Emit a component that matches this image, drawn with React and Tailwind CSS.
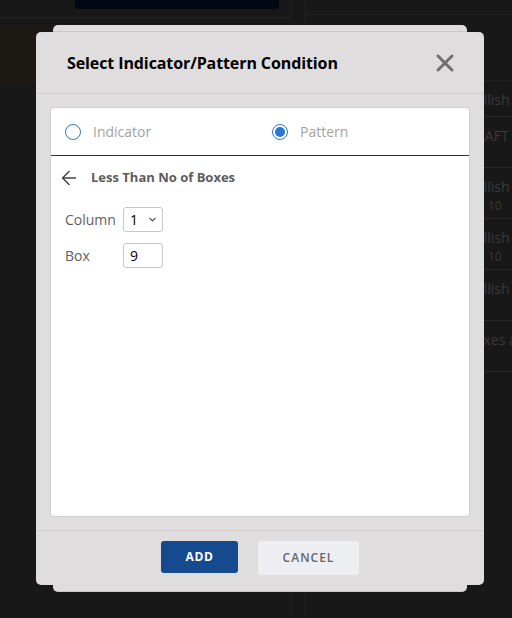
import { ArrowLeft, ChevronDown, X } from 'lucide-react';

const BG_ROWS = [
  { title: 'DRAFT and RSI', sub: '' },
  { title: 'Bullish and Boxes', sub: '10' },
  { title: 'Bullish Reversal', sub: '10' },
  { title: 'Bullish Pattern', sub: '' },
  { title: 'Boxes and Columns', sub: '' },
];

const Radio = ({ checked, label }) => (
  <label className="flex items-center gap-[12px]">
    <span className="w-[16px] h-[16px] rounded-full border-[1.5px] border-[#2b77d6] flex items-center justify-center">
      {checked && <span className="w-[10px] h-[10px] rounded-full bg-[#2b77d6]" />}
    </span>
    <span className="text-[14px] text-[#a3a3a3]">{label}</span>
  </label>
);

const App = () => {
  return (
    <div className="relative w-[512px] h-[618px] overflow-hidden bg-[#181818] font-['Open_Sans',sans-serif]">
      {/* page behind the dialog */}
      <div className="flex h-full">
        <div className="w-[291px] shrink-0 border-r border-[#1f1f1f] flex flex-col">
          <div className="h-[18px] border-b border-[#222] pl-[75px] pr-[11px]">
            <div className="h-[9px] bg-[#030712] rounded-b-[3px]" />
          </div>
          <div className="mt-[11px] h-[54px] bg-[#1c1813]" />
        </div>
        <div className="flex-1 min-w-0 ml-[14px] border-l border-[#1f1f1f] flex flex-col overflow-hidden">
          <div className="h-[15px] border-b border-[#232323]" />
          <div className="h-[66px] border-b border-[#222]" />
          <div className="h-[36px] border-b border-[#262626] pl-[160px] pt-[10px] text-[14px] leading-[18px] text-[#3a3a3a] whitespace-nowrap">
            Bullish Engulfing and
          </div>
          {BG_ROWS.map((row) => (
            <div
              key={row.title}
              className="h-[51px] border-b border-[#262626] pl-[160px] pt-[10px] text-[14px] leading-[18px] text-[#3a3a3a] whitespace-nowrap"
            >
              <p>{row.title}</p>
              {row.sub && <p className="pl-[22px] text-[12px] mt-[1px]">{row.sub}</p>}
            </div>
          ))}
        </div>
      </div>

      {/* stacked dialog behind */}
      <div className="absolute left-[53px] top-[25px] w-[414px] h-[567px] rounded-[5px] bg-[#dedcdc] border-b border-[#c9c7c7]">
        <div className="h-[7px] border-b border-[#c9c7c7]" />
      </div>

      {/* dialog */}
      <div className="absolute left-[36px] top-[32px] w-[448px] h-[553px] rounded-[5px] bg-[#dfdddd] flex flex-col">
        <div className="h-[62px] shrink-0 flex items-center justify-between pl-[31px] pr-[25px] border-b border-[#cdcbcb]">
          <h2 className="text-[16px] font-bold text-black tracking-[-0.1px]">
            Select Indicator/Pattern Condition
          </h2>
          <X size={28} strokeWidth={2.5} className="text-[#6e6e6e]" />
        </div>

        <div className="flex-1 px-[14px] pt-[13px] pb-[13px]">
          <div className="h-full bg-white rounded-[4px] border border-[#cfcfcf] flex flex-col">
            <div className="h-[48px] shrink-0 flex items-center pl-[14px] border-b border-[#333]">
              <div className="w-[207px]">
                <Radio label="Indicator" />
              </div>
              <Radio checked label="Pattern" />
            </div>

            <div className="px-[14px] pt-[12px]">
              <div className="flex items-center gap-[11px] h-[20px]">
                <ArrowLeft size={22} strokeWidth={1.6} className="text-[#444] -ml-[7px]" />
                <span className="text-[13px] font-bold text-[#5c5c5c]">Less Than No of Boxes</span>
              </div>

              <div className="mt-[19px] flex flex-col gap-[11px] text-[14px] text-[#5f5f5f]">
                <div className="flex items-center">
                  <span className="w-[58px]">Column</span>
                  <div className="w-[40px] h-[25px] border border-[#c9c9c9] rounded-[3px] flex items-center justify-between pl-[6px] pr-[4px] text-black">
                    <span>1</span>
                    <ChevronDown size={11} strokeWidth={2.5} className="text-[#444]" />
                  </div>
                </div>
                <div className="flex items-center">
                  <span className="w-[58px]">Box</span>
                  <div className="w-[40px] h-[25px] border border-[#c9c9c9] rounded-[3px] flex items-center pl-[6px] text-black">
                    9
                  </div>
                </div>
              </div>
            </div>
          </div>
        </div>

        <div className="h-[55px] shrink-0 border-t border-[#cdcbcb] flex justify-center gap-[20px] pt-[10px]">
          <button className="w-[77px] h-[32px] rounded-[3px] bg-[#154a8f] text-white text-[12px] font-bold tracking-[0.6px]">
            ADD
          </button>
          <button className="w-[101px] h-[34px] rounded-[3px] bg-[#edeef1] text-[#666] text-[12px] font-semibold tracking-[1px]">
            CANCEL
          </button>
        </div>
      </div>
    </div>
  );
};

export default App;
